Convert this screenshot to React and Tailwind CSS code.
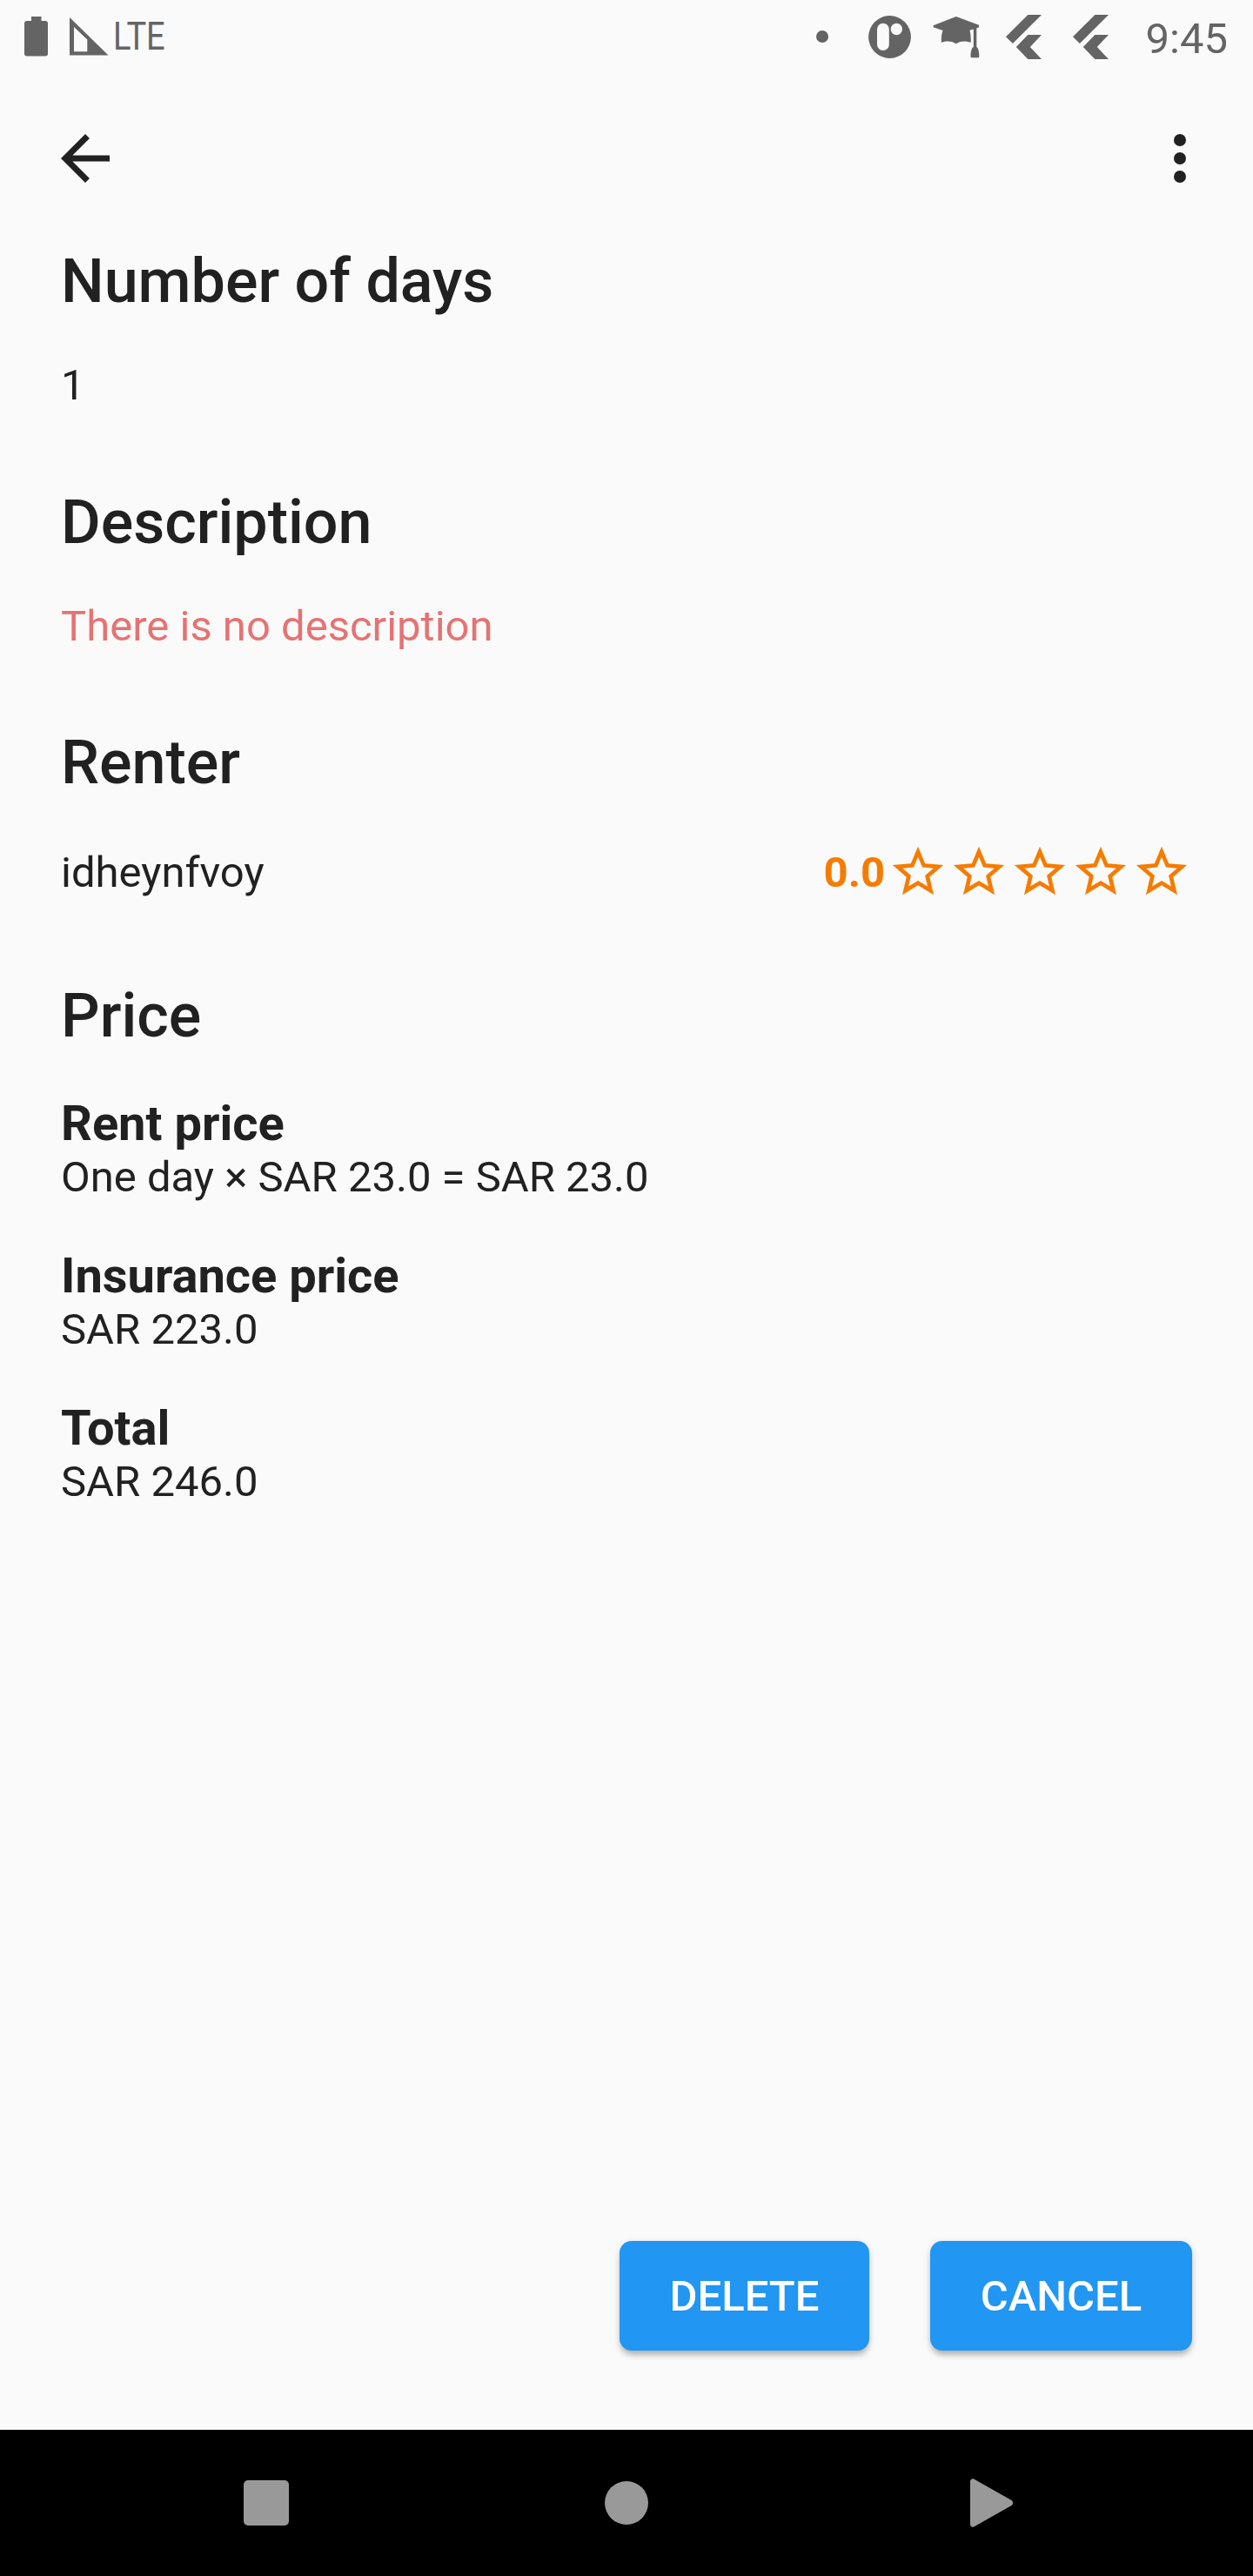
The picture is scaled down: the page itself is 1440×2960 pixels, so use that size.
const STAR =
  'M22 9.24l-7.19-.62L12 2 9.19 8.63 2 9.24l5.46 4.73L5.82 21 12 17.27 18.18 21l-1.63-7.03L22 9.24zM12 15.4l-3.76 2.27 1-4.28-3.32-2.88 4.38-.38L12 6.1l1.71 4.04 4.38.38-3.32 2.88 1 4.28L12 15.4z';

function FlutterIcon({ className }) {
  return (
    <svg className={className} width="41" height="51" viewBox="0 0 41 51" fill="currentColor">
      <path d="M25.3 0H41L7.9 33 0 25.3z" />
      <path d="M25.3 23H41L27.8 37 41 51H25.3L11.8 37z" />
    </svg>
  );
}

function StatusBar() {
  return (
    <header className="flex h-[84px] items-start justify-between pr-[29px] pl-[28px] text-[#646464]">
      <div className="flex">
        <svg className="mt-[19px]" width="27" height="46" viewBox="0 0 27 46" fill="currentColor">
          <path d="M8 0h11.500v5H24a3 3 0 0 1 3 3v34.500a3 3 0 0 1-3 3H3a3 3 0 0 1-3-3V8a3 3 0 0 1 3-3h5z" />
        </svg>
        <svg className="mt-[20px] ml-[25px]" width="45" height="44" viewBox="0 0 45 44" fill="currentColor">
          <path fillRule="evenodd" d="M0 0l44.500 43.500H0zM5 11v28.300h15.300V25.500z" />
        </svg>
        <span className="mt-[16px] ml-[5px] origin-left scale-x-[0.87] text-[43.750px] leading-[52px]">LTE</span>
      </div>
      <div className="flex">
        <span className="mt-[35px] size-[14px] rounded-full bg-[#646464]" />
        <svg className="mt-[18px] ml-[46px]" width="49" height="49" viewBox="0 0 49 49" fill="currentColor">
          <circle cx="24.500" cy="24.500" r="24.400" />
          <rect x="10" y="8.700" width="13.800" height="31.300" rx="6.900" fill="#fafafa" />
          <circle cx="32.300" cy="15.500" r="6.700" fill="#fafafa" />
        </svg>
        <svg className="mt-[19px] ml-[25.500px]" width="54" height="48" viewBox="0 0 54 48" fill="currentColor">
          <path d="M26.800 0L53 9.800v2.500L50.300 13.500V35c2 .7 3 6 3 11a1.300 1.300 0 0 1-1.300 1.200h-7.200a1.300 1.300 0 0 1-1.300-1.200c0-5 1-10.300 3.300-11V14.400L42.500 15.800C43.500 20 44 25 43.700 30c-5-1.800-11-2.400-16.900 1.300C21 27.600 15 28.200 9.900 29.900 9.600 25 10 20 11.500 16L.6 12.300V10.300z" />
        </svg>
        <FlutterIcon className="mt-[17px] ml-[29.500px]" />
        <FlutterIcon className="mt-[17px] ml-[36px]" />
        <span className="mt-[14px] ml-[43px] text-[49px] leading-[62px]">9:45</span>
      </div>
    </header>
  );
}

function AppBar() {
  return (
    <nav className="flex h-[196px] items-center justify-between px-[56px] text-[#212121]">
      <button aria-label="Back">
        <svg width="84" height="84" viewBox="0 0 24 24" fill="currentColor">
          <path d="M20 11H7.830l5.590-5.590L12 4l-8 8 8 8 1.410-1.410L7.830 13H20v-2z" />
        </svg>
      </button>
      <button aria-label="More options" className="-mr-[14px]">
        <svg width="84" height="84" viewBox="0 0 24 24" fill="currentColor">
          <circle cx="12" cy="6" r="2" />
          <circle cx="12" cy="12" r="2" />
          <circle cx="12" cy="18" r="2" />
        </svg>
      </button>
    </nav>
  );
}

function Title({ children }) {
  return <h2 className="text-[70px] leading-[84px] font-medium">{children}</h2>;
}

function PriceItem({ label, value }) {
  return (
    <div>
      <h3 className="text-[56px] leading-[62px] font-bold">{label}</h3>
      <p className="text-[49px] leading-[62px]">{value}</p>
    </div>
  );
}

function ActionButton({ className, children }) {
  return (
    <button
      className={`${className} h-[126px] rounded-[14px] bg-[#2196f3] pt-px text-[49px] leading-[61px] font-medium text-white shadow-[0_7px_7px_-2px_rgba(0,0,0,0.22),0_2px_8px_rgba(0,0,0,0.14)]`}
    >
      {children}
    </button>
  );
}

export default function App() {
  return (
    <div className="flex h-[2960px] w-[1440px] flex-col overflow-hidden bg-[#fafafa] font-['Roboto',sans-serif] text-[#212121]">
      <StatusBar />
      <AppBar />
      <main className="flex flex-1 flex-col px-[70px] pt-px pb-[91px]">
        <section className="flex flex-col gap-[47px]">
          <Title>Number of days</Title>
          <p className="text-[49px] leading-[62px]">1</p>
        </section>
        <section className="mt-[84px] flex flex-col gap-[47px]">
          <Title>Description</Title>
          <p className="text-[49px] leading-[62px] text-[#e57373]">There is no description</p>
        </section>
        <section className="mt-[83px] flex flex-col gap-[49px]">
          <Title>Renter</Title>
          <div className="flex h-[70px] items-center justify-between">
            <p className="pt-px text-[49px] leading-[61px]">idheynfvoy</p>
            <div className="flex items-center text-[#f57c00]">
              <span className="mr-[3px] pt-px text-[49px] leading-[61px] font-bold">0.0</span>
              {[1, 2, 3, 4, 5].map((n) => (
                <svg key={n} width="70" height="70" viewBox="0 0 24 24" fill="currentColor">
                  <path d={STAR} />
                </svg>
              ))}
            </div>
          </div>
        </section>
        <section className="mt-[88px]">
          <Title>Price</Title>
          <div className="mt-[51px] flex flex-col gap-[51px]">
            <PriceItem label="Rent price" value="One day × SAR 23.0 = SAR 23.0" />
            <PriceItem label="Insurance price" value="SAR 223.0" />
            <PriceItem label="Total" value="SAR 246.0" />
          </div>
        </section>
        <div className="mt-auto flex justify-end gap-[70px]">
          <ActionButton className="w-[287px]">DELETE</ActionButton>
          <ActionButton className="w-[301px]">CANCEL</ActionButton>
        </div>
      </main>
      <footer className="flex h-[168px] items-center bg-black pl-[280px]">
        <span className="size-[52px] rounded-[5px] bg-[#999999]" />
        <span className="ml-[363px] size-[50px] rounded-full bg-[#999999]" />
        <svg className="ml-[370px] text-[#999999]" width="50" height="56" viewBox="0 0 50 56" fill="currentColor">
          <path d="M0 3.500C0 .5 3-.8 5.500 1.200L47.500 25c2 1.500 2 4.500 0 6L5.500 54.800C3 56.800 0 55.500 0 52.500z" />
        </svg>
      </footer>
    </div>
  );
}
